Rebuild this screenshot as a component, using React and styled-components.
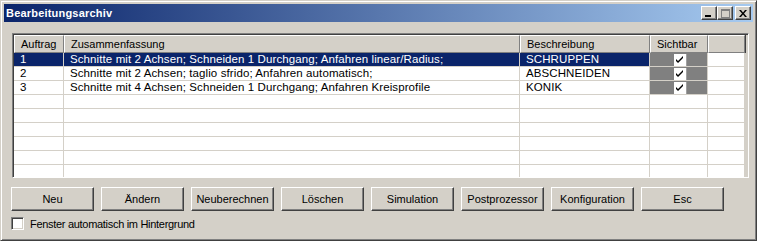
import styled, { createGlobalStyle } from "styled-components";

const GlobalStyle = createGlobalStyle`
  html, body {
    margin: 0;
    padding: 0;
    background: #d4d0c8;
  }
  body {
    font-family: "Liberation Sans", Arial, sans-serif;
    font-size: 11px;
    color: #000;
  }
`;

const columns = [
  { key: "auftrag", title: "Auftrag", width: 50 },
  { key: "summary", title: "Zusammenfassung", width: 456 },
  { key: "desc", title: "Beschreibung", width: 130 },
  { key: "visible", title: "Sichtbar", width: 58 },
  { key: "rest", title: "", width: 37 },
];

const jobs = [
  { id: 1, summary: "Schnitte mit 2 Achsen; Schneiden 1 Durchgang; Anfahren linear/Radius;", desc: "SCHRUPPEN", visible: true },
  { id: 2, summary: "Schnitte mit 2 Achsen; taglio sfrido; Anfahren automatisch;", desc: "ABSCHNEIDEN", visible: true },
  { id: 3, summary: "Schnitte mit 4 Achsen; Schneiden 1 Durchgang; Anfahren Kreisprofile", desc: "KONIK", visible: true },
];

const buttons = ["Neu", "Ändern", "Neuberechnen", "Löschen", "Simulation", "Postprozessor", "Konfiguration", "Esc"];

export default function App() {
  const emptyRows = 6;

  return (
    <>
      <GlobalStyle />
      <Window>
        <TitleBar>
          <Title>Bearbeitungsarchiv</Title>
          <TitleButtons>
            <CaptionButton aria-label="minimieren">
              <svg width="8" height="7" viewBox="0 0 8 7">
                <rect x="0" y="5" width="6" height="2" fill="#000" />
              </svg>
            </CaptionButton>
            <CaptionButton aria-label="maximieren">
              <svg width="9" height="9" viewBox="0 0 9 9">
                <rect x="0.5" y="0.5" width="8" height="8" fill="none" stroke="#808080" />
                <rect x="0" y="0" width="9" height="2" fill="#808080" />
              </svg>
            </CaptionButton>
            <CaptionButton aria-label="schliessen" $gap>
              <svg width="8" height="7" viewBox="0 0 8 7">
                <path d="M0 0h2l2 2.5L6 0h2L5 3.5 8 7H6L4 4.5 2 7H0l3-3.5z" fill="#000" />
              </svg>
            </CaptionButton>
          </TitleButtons>
        </TitleBar>

        <Content>
          <Grid>
            <Row $header>
              {columns.map((col) => (
                <HeaderCell key={col.key} style={{ width: col.width }}>
                  {col.title}
                </HeaderCell>
              ))}
            </Row>
            {jobs.map((job, i) => (
              <Row key={job.id}>
                <Cell style={{ width: columns[0].width }} $selected={i === 0}>{job.id}</Cell>
                <Cell style={{ width: columns[1].width }} $selected={i === 0}>{job.summary}</Cell>
                <Cell style={{ width: columns[2].width }} $selected={i === 0}>{job.desc}</Cell>
                <CheckCell style={{ width: columns[3].width }}>
                  <CellCheck>
                    {job.visible && (
                      <svg width="9" height="9" viewBox="0 0 9 9">
                        <path d="M1 4l2 2 5-5v2L3 8 1 6z" fill="#000" />
                      </svg>
                    )}
                  </CellCheck>
                </CheckCell>
                <Cell style={{ width: columns[4].width }} />
              </Row>
            ))}
            {Array.from({ length: emptyRows }).map((_, i) => (
              <Row key={"e" + i}>
                {columns.map((col) => (
                  <Cell key={col.key} style={{ width: col.width }} />
                ))}
              </Row>
            ))}
          </Grid>

          <ButtonBar>
            {buttons.map((label) => (
              <Button key={label}>{label}</Button>
            ))}
          </ButtonBar>

          <CheckRow>
            <CheckBox />
            <CheckLabel>Fenster automatisch im Hintergrund</CheckLabel>
          </CheckRow>
        </Content>
      </Window>
    </>
  );
}

const Window = styled.div`
  width: 757px;
  height: 241px;
  box-sizing: border-box;
  background: #d4d0c8;
  border: 1px solid;
  border-color: #d4d0c8 #404040 #404040 #d4d0c8;
  box-shadow: inset 1px 1px #fff, inset -1px -1px #808080;
  padding: 3px 3px 2px 3px;
  display: flex;
  flex-direction: column;
  overflow: hidden;
`;

const TitleBar = styled.div`
  height: 18px;
  display: flex;
  align-items: center;
  justify-content: space-between;
  background: linear-gradient(to right, #0a246a, #a6caf0);
  padding: 0 2px 0 2px;
`;

const Title = styled.div`
  color: #fff;
  font-weight: bold;
  font-size: 11px;
  letter-spacing: 0.2px;
`;

const TitleButtons = styled.div`
  display: flex;
  align-items: center;
`;

const CaptionButton = styled.div`
  width: 16px;
  height: 14px;
  box-sizing: border-box;
  background: #d4d0c8;
  border: 1px solid;
  border-color: #fff #404040 #404040 #fff;
  box-shadow: inset -1px -1px #808080;
  display: flex;
  align-items: center;
  justify-content: center;
  margin-left: ${(p) => (p.$gap ? "2px" : "0")};
`;

const Content = styled.div`
  flex: 1;
  display: flex;
  flex-direction: column;
  padding: 11px 0 0 7px;
`;

const Grid = styled.div`
  width: 737px;
  height: 145px;
  box-sizing: border-box;
  margin-left: 1px;
  border: 1px solid;
  border-color: #808080 #fff #fff #808080;
  box-shadow: inset 1px 1px #404040, inset -1px -1px #d4d0c8;
  padding: 1px 2px 0 1px;
  background: #d4d0c8;
  overflow: hidden;
`;

const Row = styled.div`
  display: flex;
  height: ${(p) => (p.$header ? "18px" : "14px")};
`;

const HeaderCell = styled.div`
  box-sizing: border-box;
  height: 18px;
  flex-shrink: 0;
  padding-left: 6px;
  line-height: 16px;
  border: 1px solid;
  border-color: #fff #808080 #808080 #fff;
  box-shadow: 1px 0 #404040;
  background: #d4d0c8;
  white-space: nowrap;
  overflow: hidden;
`;

const Cell = styled.div`
  box-sizing: border-box;
  flex-shrink: 0;
  height: 14px;
  padding-left: 6px;
  font-size: 11.5px;
  letter-spacing: 0.1px;
  line-height: 13px;
  white-space: nowrap;
  overflow: hidden;
  background: ${(p) => (p.$selected ? "#0a246a" : "#fff")};
  color: ${(p) => (p.$selected ? "#fff" : "#000")};
  border-right: 1px solid #d4d0c8;
  border-bottom: 1px solid #d4d0c8;
`;

const CheckCell = styled.div`
  box-sizing: border-box;
  flex-shrink: 0;
  height: 14px;
  background: #808080;
  border-right: 1px solid #d4d0c8;
  border-bottom: 1px solid #d4d0c8;
  display: flex;
  justify-content: center;
  align-items: center;
`;

const CellCheck = styled.div`
  width: 12px;
  height: 12px;
  margin-left: 2px;
  box-sizing: border-box;
  background: #fff;
  display: flex;
  align-items: center;
  justify-content: center;
  box-shadow: 1px 0 #a0a0a0;
`;

const ButtonBar = styled.div`
  display: flex;
  gap: 7px;
  margin-top: 9px;
`;

const Button = styled.div`
  width: 83px;
  height: 24px;
  box-sizing: border-box;
  border: 1px solid;
  border-color: #fff #404040 #404040 #fff;
  box-shadow: inset -1px -1px #808080;
  display: flex;
  align-items: center;
  justify-content: center;
  padding-bottom: 1px;
  white-space: nowrap;
`;

const CheckRow = styled.div`
  display: flex;
  align-items: center;
  gap: 6px;
  margin-top: 6px;
  height: 13px;
`;

const CheckBox = styled.div`
  width: 13px;
  height: 13px;
  box-sizing: border-box;
  background: #fff;
  border: 1px solid;
  border-color: #808080 #fff #fff #808080;
  box-shadow: inset 1px 1px #404040, inset -1px -1px #d4d0c8;
`;

const CheckLabel = styled.span`
  letter-spacing: -0.3px;
`;
